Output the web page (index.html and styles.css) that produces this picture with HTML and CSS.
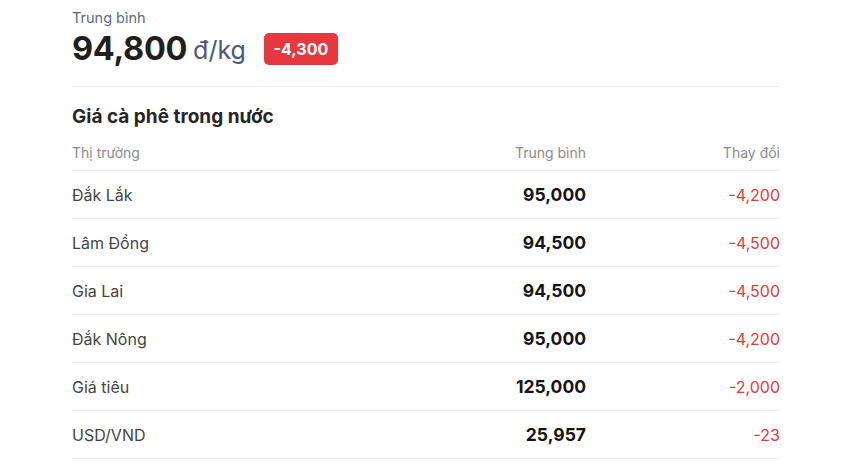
FILE: index.html
```html
<!DOCTYPE html>
<html lang="vi">
<head>
<meta charset="utf-8">
<link rel="stylesheet" href="styles.css">
</head>
<body>
<main class="page">
  <div class="label">Trung bình</div>
  <div class="price-row">
    <span class="price">94,800</span>
    <span class="unit">đ/kg</span>
    <span class="badge">-4,300</span>
  </div>
  <hr class="divider">
  <h2 class="title">Giá cà phê trong nước</h2>
  <div class="table">
    <div class="row head">
      <div class="c-name">Thị trường</div>
      <div class="c-avg">Trung bình</div>
      <div class="c-chg">Thay đổi</div>
    </div>
    <div class="row">
      <div class="c-name">Đắk Lắk</div>
      <div class="c-avg">95,000</div>
      <div class="c-chg">-4,200</div>
    </div>
    <div class="row">
      <div class="c-name">Lâm Đồng</div>
      <div class="c-avg">94,500</div>
      <div class="c-chg">-4,500</div>
    </div>
    <div class="row">
      <div class="c-name">Gia Lai</div>
      <div class="c-avg">94,500</div>
      <div class="c-chg">-4,500</div>
    </div>
    <div class="row">
      <div class="c-name">Đắk Nông</div>
      <div class="c-avg">95,000</div>
      <div class="c-chg">-4,200</div>
    </div>
    <div class="row">
      <div class="c-name">Giá tiêu</div>
      <div class="c-avg">125,000</div>
      <div class="c-chg">-2,000</div>
    </div>
    <div class="row">
      <div class="c-name">USD/VND</div>
      <div class="c-avg">25,957</div>
      <div class="c-chg">-23</div>
    </div>
  </div>
</main>
</body>
</html>
```
FILE: styles.css
```css
* { box-sizing: border-box; }
html, body { margin: 0; background: #fff; }
body {
  font-family: Inter, "Noto Sans", sans-serif;
  color: #222;
}
.page {
  width: 708px;
  margin-left: 72px;
  padding-top: 8px;
}
.label {
  font-size: 14.5px;
  line-height: 20px;
  color: #5d6b82;
}
.price-row {
  margin-top: 2px;
  height: 36px;
  display: flex;
  align-items: center;
}
.price {
  font-size: 32.5px;
  font-weight: 700;
  color: #1f1f1f;
  letter-spacing: -0.3px;
}
.unit {
  margin-left: 6px;
  margin-top: 4px;
  font-size: 25px;
  color: #4a5a75;
}
.badge {
  margin-left: 18px;
  margin-top: 2px;
  height: 32px;
  width: 74px;
  display: flex;
  align-items: center;
  justify-content: center;
  background: #e5383f;
  color: #fff;
  font-weight: 700;
  font-size: 16px;
  border-radius: 5px;
}
.divider {
  margin: 20px 0 0;
  border: 0;
  border-top: 1px solid #efefef;
  height: 0;
}
.title {
  margin: 18px 0 0;
  font-size: 19px;
  line-height: 24px;
  font-weight: 700;
  color: #262626;
}
.table { margin-top: 5px; }
.row {
  display: grid;
  grid-template-columns: 1fr 200px 194px;
  align-items: center;
  height: 48px;
  border-bottom: 1px solid #efefef;
  font-size: 16px;
}
.row.head {
  height: 37px;
  font-size: 14px;
}
.c-name { color: #444; }
.head .c-name, .head .c-avg, .head .c-chg { color: #8a8a8a; font-weight: 400; }
.c-avg {
  text-align: right;
  font-weight: 700;
  font-size: 17.5px;
  color: #141414;
}
.c-chg {
  text-align: right;
  color: #e53935;
}
.head .c-avg { font-size: 14px; }
```
